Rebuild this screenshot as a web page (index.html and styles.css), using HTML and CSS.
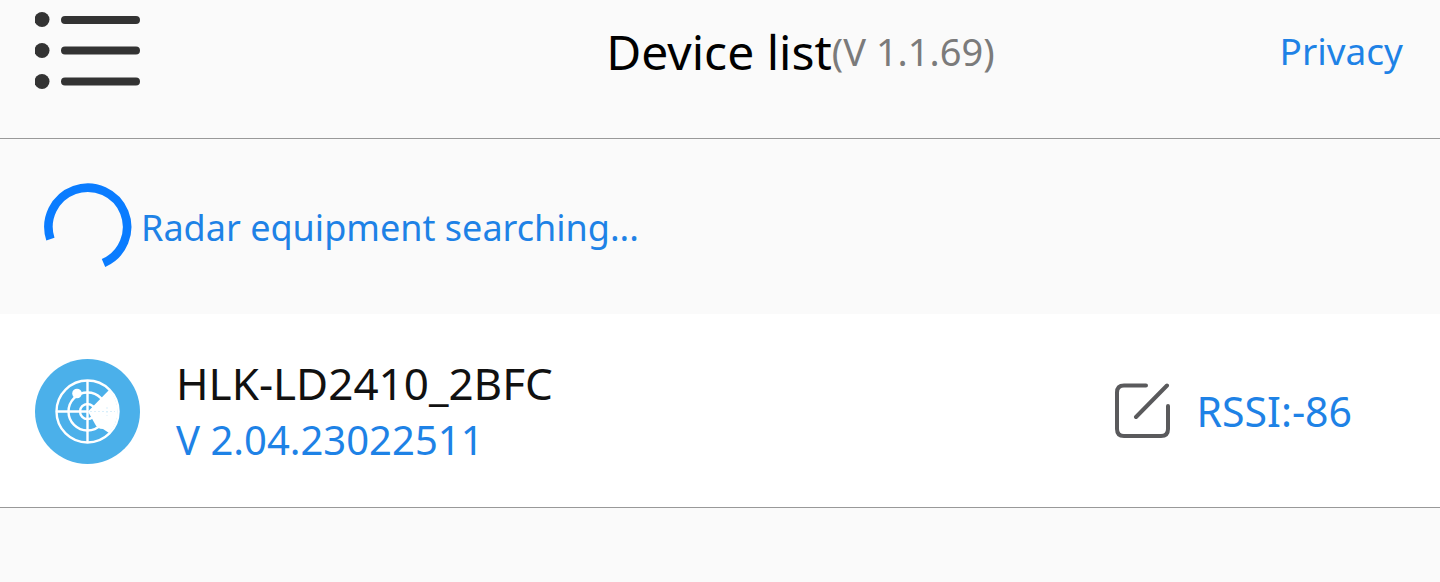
FILE: index.html
```html
<!DOCTYPE html>
<html lang="en">
<head>
<meta charset="utf-8">
<meta name="viewport" content="width=device-width, initial-scale=1">
<title>Device list</title>
<link rel="stylesheet" href="styles.css">
</head>
<body>
<header class="header">
  <button class="icon-button menu" type="button" aria-label="Menu">
    <svg class="menu-icon" viewBox="0 0 105 78" aria-hidden="true">
      <g fill="#333"><circle cx="7" cy="7.500" r="7.500"/><circle cx="7" cy="38.500" r="7.500"/><circle cx="7" cy="69.500" r="7.500"/></g>
      <path d="M30 8H101M30 38.500H101M30 69.500H101" stroke="#333" stroke-width="8" stroke-linecap="round"/>
    </svg>
  </button>
  <h1 class="title">Device list</h1>
  <div class="header-end">
    <span class="app-version">(V 1.1.69)</span>
    <a class="privacy" href="#privacy">Privacy</a>
  </div>
</header>
<main>
  <div class="status" role="status">
    <svg class="spinner" viewBox="0 0 88 88" aria-hidden="true">
      <path d="M6.400 56.100A39.300 39.300 0 1 1 59.500 80" fill="none" stroke="#0a7cff" stroke-width="8.600"/>
    </svg>
    <span>Radar equipment searching...</span>
  </div>
  <ul class="devices">
    <li class="device">
      <svg class="radar" viewBox="0 0 105 105" aria-hidden="true">
        <circle cx="52.500" cy="52.500" r="52.500" fill="#4bb0ea"/>
        <path d="M53 52.500L74 31A31 31 0 0 1 74 74L68 70Q62 70 60 65Z" fill="#fff"/>
        <g fill="none" stroke="#fff" stroke-width="2.400"><circle cx="52.500" cy="52.500" r="31"/><circle cx="52.500" cy="52.500" r="19"/><circle cx="52.500" cy="52.500" r="7.500"/><path d="M21 52.500H53M52.500 21V84"/></g>
        <circle cx="42" cy="34.500" r="4.800" fill="#fff"/>
        <path d="M55 52.500H80M72 48V57" fill="none" stroke="#d9effb" stroke-width="1" stroke-dasharray="2 2"/>
      </svg>
      <div class="details">
        <h2 class="name">HLK-LD2410_2BFC</h2>
        <p class="firmware">V 2.04.23022511</p>
      </div>
      <button class="icon-button edit" type="button" aria-label="Rename device">
        <svg class="edit-icon" viewBox="0 0 56 56" aria-hidden="true">
          <path d="M31 2.500H9Q2 2.500 2 9.500V46Q2 53 9 53H46Q53 53 53 46V23M21 34L52 2.500" fill="none" stroke="#5a5a5c" stroke-width="4" stroke-linecap="round"/>
        </svg>
      </button>
      <span class="rssi">RSSI:-86</span>
    </li>
  </ul>
</main>
</body>
</html>
```
FILE: styles.css
```css
* { box-sizing: border-box; }
body { margin: 0; background: #fafafa; color: #111; font-family: "Noto Sans", sans-serif; }
h1, h2, p, ul { margin: 0; padding: 0; font-weight: 400; }
svg { display: block; }
.icon-button { padding: 0; border: 0; background: none; cursor: pointer; }
.header { display: grid; grid-template-columns: 1fr auto 1fr; align-items: start; padding: 12px 37px 46px 35px; border-bottom: 1px solid #999; }
.menu { justify-self: start; }
.menu-icon { width: 105px; height: 78px; }
.title { color: #000; font-size: 48px; line-height: 80px; }
.header-end { display: flex; justify-content: space-between; line-height: 80px; }
.app-version { color: #7b7b7b; font-size: 38px; line-height: 78px; }
.privacy { color: #1e82e6; font-size: 37px; line-height: 78px; text-decoration: none; }
.status { display: flex; align-items: center; gap: 9px; padding: 44px 44px 43px; color: #1e82e6; font-size: 36px; }
.spinner { width: 88px; height: 88px; }
.devices { list-style: none; }
.device { display: flex; align-items: center; padding: 40px 88px 40px 35px; background: #fff; border-bottom: 1px solid #999; }
.radar { width: 105px; height: 105px; margin-right: 36px; }
.details { flex: 1; }
.name { font-size: 44px; line-height: 58px; }
.firmware { color: #1e82e6; font-size: 40px; line-height: 56px; }
.edit-icon { width: 56px; height: 56px; margin-right: 25px; }
.rssi { color: #1e82e6; font-size: 41px; }
.device { padding-bottom: 39px; }
```
